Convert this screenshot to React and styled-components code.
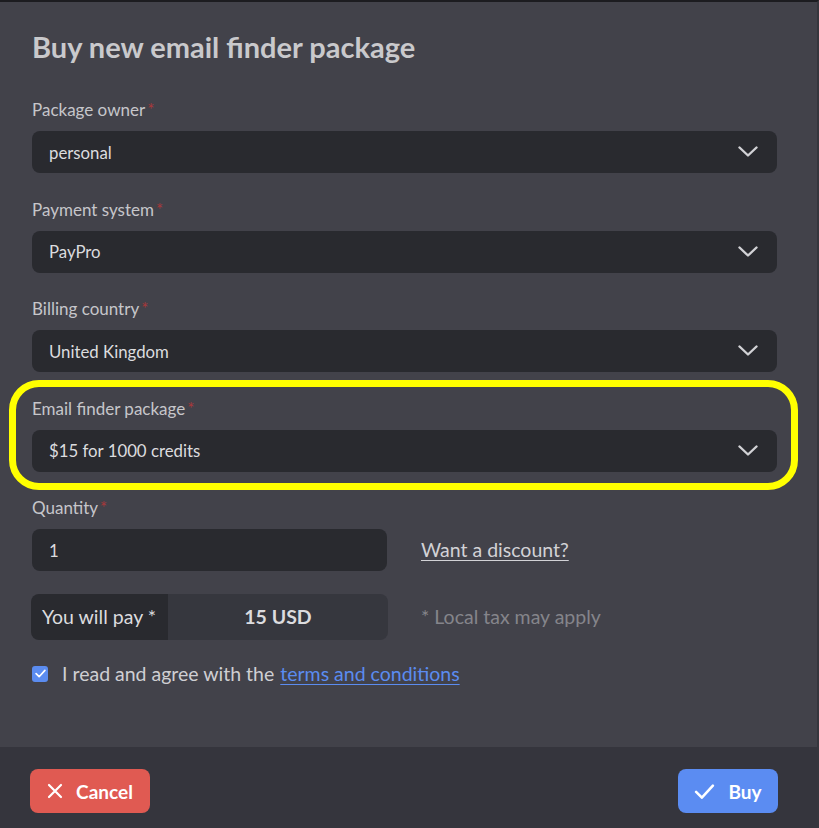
import React from "react";
import styled, { createGlobalStyle } from "styled-components";

const Global = createGlobalStyle`
  html, body { margin: 0; padding: 0; background: #42424a; }
  body { font-family: Lato, "Open Sans", sans-serif; }
  * { box-sizing: border-box; }
`;

const Dialog = styled.div`
  width: 819px;
  min-height: 828px;
  display: flex;
  flex-direction: column;
  background: #42424a;
  border-top: 2px solid #1c1c20;
  border-right: 2px solid #36363d;
`;

const Body = styled.div`
  flex: 1;
  padding: 28px 40px 0 32px;
  display: flex;
  flex-direction: column;
`;

const Title = styled.h1`
  margin: 0 0 36px;
  font-size: 29px;
  line-height: 34px;
  font-weight: 700;
  color: #c9c9cc;
`;

const Field = styled.div`
  position: relative;
  display: flex;
  flex-direction: column;
  gap: 11px;
  margin-bottom: ${(p) => (p.$tight ? "22.5px" : "26.5px")};
  ${(p) =>
    p.$highlight &&
    `
    &::after {
      content: "";
      position: absolute;
      left: -23px;
      right: -21px;
      top: -19px;
      bottom: -18px;
      border: 7px solid #ffff00;
      border-radius: 30px;
      pointer-events: none;
    }
  `}
`;

const Label = styled.div`
  font-size: 17px;
  line-height: 20px;
  color: #c6c6ca;
  span {
    color: #a8383a;
    margin-left: 2px;
  }
`;

const Select = styled.div`
  height: 42px;
  flex: none;
  border-radius: 8px;
  background: #292a2f;
  display: flex;
  align-items: center;
  justify-content: space-between;
  padding: 0 19px 0 17px;
  font-size: 16.8px;
  color: #dcdcdf;
`;

const Chevron = () => (
  <svg width="20" height="12" viewBox="0 0 20 12" fill="none">
    <path d="M1.5 1.5 L10 9.5 L18.5 1.5" stroke="#d2d2d6" strokeWidth="2.4" strokeLinecap="round" strokeLinejoin="round" />
  </svg>
);

const Row = styled.div`
  display: flex;
  align-items: center;
  gap: 34px;
`;

const Input = styled.div`
  width: 355px;
  height: 42px;
  border-radius: 8px;
  background: #292a2f;
  display: flex;
  align-items: center;
  padding: 0 17px;
  font-size: 16.8px;
  color: #dcdcdf;
`;

const Discount = styled.a`
  font-size: 19.5px;
  line-height: 24px;
  color: #d2d2d6;
  text-decoration: underline;
  text-underline-offset: 3px;
`;

const PayBox = styled.div`
  width: 357px;
  height: 46px;
  margin-left: -1px;
  border-radius: 8px;
  overflow: hidden;
  display: flex;
  font-size: 19.5px;
`;

const PayLabel = styled.div`
  width: 137px;
  background: #292a2f;
  color: #dcdcdf;
  display: flex;
  align-items: center;
  padding-left: 11px;
`;

const PayValue = styled.div`
  flex: 1;
  background: #36373e;
  color: #dcdcdf;
  font-weight: 700;
  display: flex;
  align-items: center;
  justify-content: center;
`;

const Tax = styled.div`
  font-size: 19.5px;
  color: #85858b;
  margin-left: -1px;
`;

const Agree = styled.label`
  display: flex;
  align-items: center;
  gap: 14px;
  margin-top: 22px;
  font-size: 19.5px;
  line-height: 24px;
  color: #cfcfd3;
  a {
    color: #5b8cf0;
    text-decoration: underline;
    text-underline-offset: 3px;
    margin-left: 6px;
  }
`;

const Check = styled.span`
  width: 16px;
  height: 16px;
  border-radius: 3px;
  background: #5b8cf0;
  display: inline-flex;
  align-items: center;
  justify-content: center;
`;

const Footer = styled.div`
  height: 81px;
  background: #35353d;
  display: flex;
  align-items: flex-start;
  justify-content: space-between;
  padding: 22px 39px 0 30px;
`;

const Button = styled.button`
  height: 44px;
  width: ${(p) => p.$w}px;
  border: none;
  border-radius: 8px;
  background: ${(p) => (p.$primary ? "#5b8cf2" : "#e05a52")};
  color: #ffffff;
  font-family: Lato, sans-serif;
  font-size: 19px;
  font-weight: 700;
  display: flex;
  align-items: center;
  justify-content: center;
  gap: 13px;
  padding: 0;
`;

const XIcon = () => (
  <svg width="16" height="16" viewBox="0 0 16 16">
    <path d="M2 2 L14 14 M14 2 L2 14" stroke="#fff" strokeWidth="2.2" strokeLinecap="round" />
  </svg>
);

const CheckIcon = ({ size = 21, w = 2.4 }) => (
  <svg width={size} height={size * 0.8} viewBox="0 0 20 16">
    <path d="M2 8.5 L7.5 14 L18 2.5" stroke="#fff" strokeWidth={w} fill="none" strokeLinecap="round" strokeLinejoin="round" />
  </svg>
);

const fields = [
  ["Package owner", "personal"],
  ["Payment system", "PayPro"],
  ["Billing country", "United Kingdom"],
  ["Email finder package", "$15 for 1000 credits", true],
];

export default function App() {
  return (
    <>
      <Global />
      <Dialog>
        <Body>
          <Title>Buy new email finder package</Title>
          {fields.map(([label, value, hl]) => (
            <Field key={label} $highlight={hl}>
              <Label>
                {label}
                <span>*</span>
              </Label>
              <Select>
                {value}
                <Chevron />
              </Select>
            </Field>
          ))}
          <Field $tight>
            <Label>
              Quantity<span>*</span>
            </Label>
            <Row>
              <Input>1</Input>
              <Discount>Want a discount?</Discount>
            </Row>
          </Field>
          <Row>
            <PayBox>
              <PayLabel>You will pay *</PayLabel>
              <PayValue>15 USD</PayValue>
            </PayBox>
            <Tax>* Local tax may apply</Tax>
          </Row>
          <Agree>
            <Check>
              <CheckIcon size={11} w={3} />
            </Check>
            <span>
              I read and agree with the<a>terms and conditions</a>
            </span>
          </Agree>
        </Body>
        <Footer>
          <Button $w={120}>
            <XIcon />
            Cancel
          </Button>
          <Button $w={100} $primary>
            <CheckIcon />
            Buy
          </Button>
        </Footer>
      </Dialog>
    </>
  );
}
